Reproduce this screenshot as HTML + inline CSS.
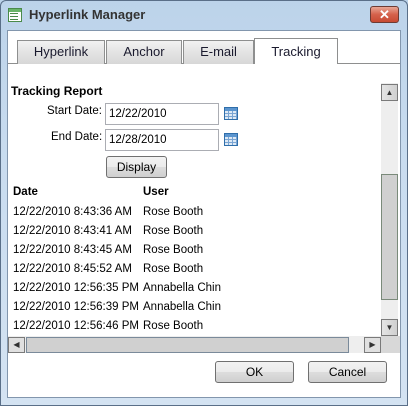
<!DOCTYPE html>
<html><head><style>
*{box-sizing:border-box;margin:0;padding:0}
body{width:408px;height:406px;overflow:hidden;font-family:"Liberation Sans",sans-serif;font-size:12px;color:#000;position:relative;background:linear-gradient(180deg,#bcd3ea 0%,#c9dcef 40%,#d4e3f2 100%)}
.a{position:absolute}
.client{left:7px;top:30px;width:394px;height:368px;background:#fff;border:1px solid #8296ad}
.tab{top:40px;height:24px;border:1px solid #8e8f8f;border-bottom:none;background:linear-gradient(#f2f2f2,#e3e3e3 50%,#d7d7d7);text-align:center;line-height:22px;font-size:13px;color:#1a1a2e}
.t{font-size:11.5px;white-space:nowrap}
.inp{height:22px;border:1px solid #abadb3;background:#fff;padding-left:3px;line-height:20px;font-size:11.5px}
.cal{width:14px;height:13px;border:1px solid #2f6eaa;background:
linear-gradient(#5b95cf 0 3px,transparent 3px),
repeating-linear-gradient(90deg,transparent 0 3px,#7aa5d3 3px 4px),
repeating-linear-gradient(0deg,#dde9f5 0 2px,#7aa5d3 2px 3px)}
.btn{border:1px solid #707070;border-radius:3px;background:linear-gradient(#f2f2f2 0,#ebebeb 50%,#dddddd 51%,#cfcfcf 100%);text-align:center;font-size:12px}
</style></head><body>
<div class="a" style="left:0;top:0;width:408px;height:406px;border:1px solid #5a6f88;border-radius:6px 6px 0 0"></div>
<div class="a" style="left:8px;top:8px;width:14px;height:14px;border:1px solid #4b8a4b;background:linear-gradient(#6ab56a 0 3px,#fff 3px);"></div>
<div class="a" style="left:10px;top:13px;width:8px;height:1px;background:#4b8a4b;box-shadow:0 3px 0 #4b8a4b,0 6px 0 #4b8a4b"></div>
<div class="a" style="left:29px;top:7px;font-size:13px;color:#333;font-weight:bold;white-space:nowrap">Hyperlink Manager</div>
<div class="a" style="left:370px;top:6px;width:29px;height:17px;border:1px solid #6d3b34;border-radius:3px;background:linear-gradient(#e8a796,#d5614b 50%,#c74a33);color:#fff;text-align:center;font-weight:bold;line-height:15px;font-size:13px">✕</div>
<div class="a client"></div>
<div class="a" style="left:8px;top:63px;width:392px;height:1px;background:#8e8f8f"></div>
<div class="a tab" style="left:17px;width:88px">Hyperlink</div>
<div class="a tab" style="left:106px;width:76px">Anchor</div>
<div class="a tab" style="left:183px;width:71px">E-mail</div>
<div class="a tab" style="left:254px;top:38px;height:26px;width:84px;background:#fff;line-height:26px">Tracking</div>
<div class="a t" style="left:11px;top:84px;font-weight:bold;font-size:12px">Tracking Report</div>
<div class="a t" style="left:47px;top:105px">Start Date:</div>
<div class="a inp" style="left:105px;top:103px;width:114px">12/22/2010</div>
<div class="a cal" style="left:224px;top:107px"></div>
<div class="a t" style="left:51px;top:131px">End Date:</div>
<div class="a inp" style="left:105px;top:129px;width:114px">12/28/2010</div>
<div class="a cal" style="left:224px;top:133px"></div>
<div class="a btn" style="left:106px;top:156px;width:61px;height:22px;line-height:20px">Display</div>
<div class="a t" style="left:13px;top:186px;font-weight:bold">Date</div>
<div class="a t" style="left:143px;top:186px;font-weight:bold">User</div>
<div class="a t" style="left:13px;top:203px;line-height:19px">12/22/2010 8:43:36 AM<br>12/22/2010 8:43:41 AM<br>12/22/2010 8:43:45 AM<br>12/22/2010 8:45:52 AM<br>12/22/2010 12:56:35 PM<br>12/22/2010 12:56:39 PM<br>12/22/2010 12:56:46 PM</div>
<div class="a t" style="left:143px;top:203px;line-height:19px">Rose Booth<br>Rose Booth<br>Rose Booth<br>Rose Booth<br>Annabella Chin<br>Annabella Chin<br>Rose Booth</div>
<div class="a" style="left:381px;top:83px;width:17px;height:253px;background:#eeeeee"></div>
<div class="a" style="left:381px;top:84px;width:17px;height:17px;border:1px solid #7a7a7a;background:linear-gradient(90deg,#e4e4e4,#d0d0d0);text-align:center;font-size:8px;line-height:15px;color:#333">▲</div>
<div class="a" style="left:381px;top:174px;width:17px;height:126px;border:1px solid #7a8a7a;background:#d0d0d0"></div>
<div class="a" style="left:381px;top:319px;width:17px;height:17px;border:1px solid #7a7a7a;background:linear-gradient(90deg,#e4e4e4,#d0d0d0);text-align:center;font-size:8px;line-height:15px;color:#333">▼</div>
<div class="a" style="left:8px;top:336px;width:392px;height:17px;background:#eeeeee"></div>
<div class="a" style="left:8px;top:337px;width:17px;height:16px;border:1px solid #7a7a7a;background:#e0e0e0;font-size:8px;line-height:14px;text-align:center;color:#333">◀</div>
<div class="a" style="left:26px;top:337px;width:323px;height:16px;border:1px solid #7a8a9a;background:#d0d0d0"></div>
<div class="a" style="left:364px;top:337px;width:17px;height:16px;border:1px solid #7a7a7a;background:#e0e0e0;font-size:8px;line-height:14px;text-align:center;color:#333">▶</div>
<div class="a" style="left:381px;top:336px;width:19px;height:17px;background:#d8d8d8"></div>
<div class="a btn" style="left:215px;top:361px;width:79px;height:22px;line-height:20px">OK</div>
<div class="a btn" style="left:308px;top:361px;width:79px;height:22px;line-height:20px">Cancel</div>
</body></html>
